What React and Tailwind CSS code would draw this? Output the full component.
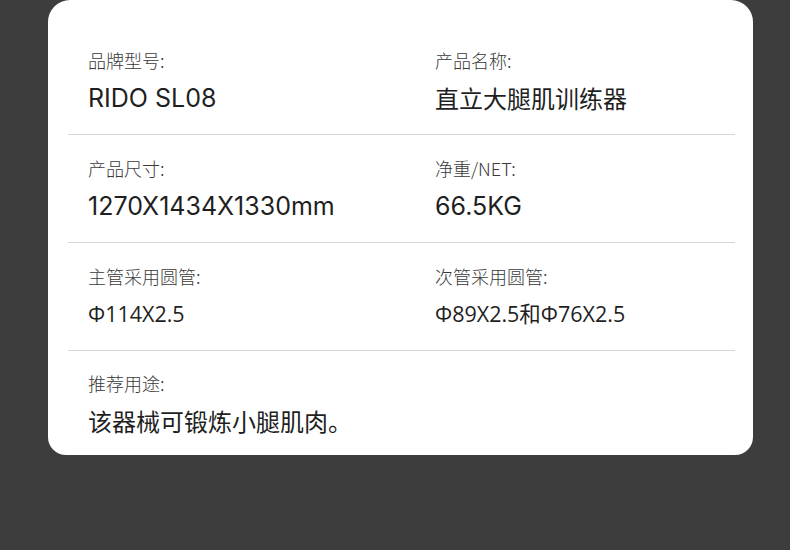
export default function App() {
  const inter = "font-['Inter','Noto_Sans_CJK_SC',sans-serif] text-[25px] font-normal";
  const open = "font-['Open_Sans','Noto_Sans_CJK_SC',sans-serif] text-[21.5px] font-normal";
  const cjk = "font-['Noto_Sans_CJK_SC',sans-serif] text-[24px]";
  const rows = [
    [["品牌型号:", "RIDO SL08", inter], ["产品名称:", "直立大腿肌训练器", cjk]],
    [["产品尺寸:", "1270X1434X1330mm", inter], ["净重/NET:", "66.5KG", inter]],
    [["主管采用圆管:", "Φ114X2.5", open], ["次管采用圆管:", "Φ89X2.5和Φ76X2.5", open]],
    [["推荐用途:", "该器械可锻炼小腿肌肉。", cjk]],
  ];
  return (
    <div className="w-[790px] h-[550px] bg-[#3d3d3d] overflow-hidden font-['Noto_Sans_CJK_SC',sans-serif]">
      <div className="ml-[48px] w-[705px] h-[455px] bg-white rounded-b-[18px] rounded-t-[22px] pl-5 pr-[18px] pt-[27px]">
        {rows.map((row, i) => {
          const last = i === rows.length - 1;
          return (
            <div
              key={i}
              className={
                last
                  ? "grid grid-cols-[347px_1fr] pt-[20px]"
                  : "grid grid-cols-[347px_1fr] pt-[21px] pb-[20px] border-b border-[#d6d6d6]"
              }
            >
              {row.map(([label, value, vcls], j) => (
                <div key={j} className="pl-5">
                  <div className="text-[18px] leading-[24px] font-light text-[#3a3a3a]">{label}</div>
                  <div className={(last ? "mt-[10px] " : "mt-[10px] ") + "leading-[32px] text-[#1f1f1f] " + vcls}>
                    {value}
                  </div>
                </div>
              ))}
            </div>
          );
        })}
      </div>
    </div>
  );
}
